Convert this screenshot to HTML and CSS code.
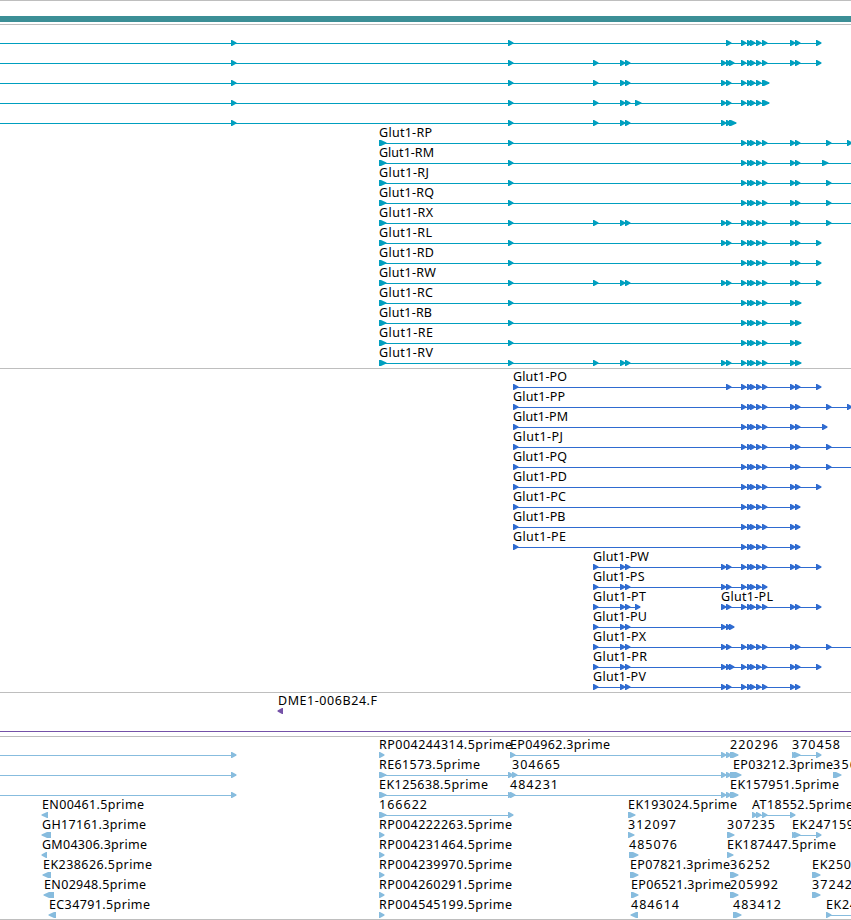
FILE: index.html
```html
<!DOCTYPE html>
<html lang="en">
<head>
    <meta charset="UTF-8">
    <meta name="viewport" content="width=device-width, initial-scale=1.0">
    <title>Glut1 - Genome Browser</title>
    <link rel="stylesheet" href="styles.css">
</head>
<body>
    <main class="browser">
        <div class="track gene-track"><div class="gene-bar"></div></div>
        <div class="track"><svg class="features transcripts" id="transcripts" width="851" height="343"></svg></div>
        <div class="track"><svg class="features cds" id="cds" width="851" height="323"></svg></div>
        <div class="track"><svg class="features bac" id="bac" width="851" height="43"></svg></div>
        <div class="track"><svg class="features est" id="est" width="851" height="182"></svg></div>
    </main>
    <script src="script.js"></script>
</body>
</html>
```
FILE: styles.css
```css
body {
    margin: 0;
    background: #fff;
    overflow: hidden;
}

.browser {
    width: 851px;
    border-top: 1px solid #bebebe;
}

.track {
    border-bottom: 1px solid #bebebe;
}

.gene-track {
    padding: 15px 0 2px;
}

.gene-bar {
    height: 6px;
    background: #3c8f96;
}

.features {
    display: block;
    fill: currentColor;
}

.features text {
    font-family: "Noto Sans", "DejaVu Sans", sans-serif;
    font-size: 12.5px;
    fill: #000;
}

.transcripts {
    color: #009fbf;
}

.cds {
    color: #2f6bd0;
}

.bac {
    color: #7552a8;
}

.est {
    color: #87bcde;
}
```
FILE: script.js
```js
const WIDTH = 851;
const FIRST_ROW = 18;
const ROW_HEIGHT = 20;

// exon = start, or [start, width]
const mid = [741, 747, 750, 756, 762];
const midLong = [741, 747, 750, 756, [762, 7]];
const pair = [790, 795];
const pairLong = [790, [795, 6]];
const small = [593, 620, 625];
const start = [[379, 7], 508];

// feature = [row, name, line start, line end, exons, text width]
const transcripts = [
    [0, '', 0, 821, [231, 508, 726, ...mid, ...pair, 816]],
    [1, '', 0, 821, [231, 508, ...small, 721, 726, 729, ...mid, ...pair, 816]],
    [2, '', 0, 769, [231, 508, ...small, 721, 726, ...midLong]],
    [3, '', 0, 769, [231, 508, ...small, [635, 6], 721, 726, ...midLong]],
    [4, '', 0, 736, [231, 508, ...small, 721, 726, [729, 7]]],
    [5, 'Glut1-RP', 379, WIDTH, [...start, ...mid, ...pair, 826, 847], 53],
    [6, 'Glut1-RM', 379, WIDTH, [...start, ...mid, ...pair, [822, 6]], 55],
    [7, 'Glut1-RJ', 379, WIDTH, [...start, ...mid, ...pair, 826], 50],
    [8, 'Glut1-RQ', 379, WIDTH, [...start, ...mid, ...pair, 826], 55],
    [9, 'Glut1-RX', 379, WIDTH, [...start, ...small, 721, 726, ...mid, ...pair, 826], 54],
    [10, 'Glut1-RL', 379, 821, [...start, 721, 726, ...mid, ...pair, 816], 53],
    [11, 'Glut1-RD', 379, 821, [...start, ...mid, ...pair, 816], 55],
    [12, 'Glut1-RW', 379, 821, [...start, ...small, 721, 726, ...mid, ...pair, 816], 57],
    [13, 'Glut1-RC', 379, 801, [...start, ...mid, ...pairLong], 54],
    [14, 'Glut1-RB', 379, 801, [...start, ...mid, ...pairLong], 53],
    [15, 'Glut1-RE', 379, 801, [...start, ...mid, ...pairLong], 54],
    [16, 'Glut1-RV', 379, 801, [...start, ...small, 721, 726, ...mid, ...pairLong], 54]
];

const cds = [
    [0, 'Glut1-PO', 513, 821, [513, 726, ...mid, ...pair, 816], 54],
    [1, 'Glut1-PP', 513, WIDTH, [513, ...mid, ...pair, 826, 847], 52],
    [2, 'Glut1-PM', 513, 827, [513, ...mid, ...pair, 822], 55],
    [3, 'Glut1-PJ', 513, WIDTH, [513, ...mid, ...pair, 826], 50],
    [4, 'Glut1-PQ', 513, WIDTH, [513, ...mid, ...pair, 826], 54],
    [5, 'Glut1-PD', 513, 821, [513, ...mid, ...pair, 816], 54],
    [6, 'Glut1-PC', 513, 800, [513, ...mid, ...pair], 53],
    [7, 'Glut1-PB', 513, 800, [513, ...mid, ...pair], 52.5],
    [8, 'Glut1-PE', 513, 800, [513, ...mid, ...pair], 53],
    [9, 'Glut1-PW', 593, 821, [...small, 721, 726, ...mid, ...pair, 816], 56],
    [10, 'Glut1-PS', 593, 767, [...small, 721, 726, ...mid], 51.5],
    [11, 'Glut1-PT', 593, 640, [...small, 635], 53],
    [11, 'Glut1-PL', 721, 821, [721, 726, ...mid, ...pair, 816], 52],
    [12, 'Glut1-PU', 593, 734, [...small, 721, 726, 729], 54],
    [13, 'Glut1-PX', 593, WIDTH, [...small, 721, 726, ...mid, ...pair, 826], 53],
    [14, 'Glut1-PR', 593, 821, [...small, 721, 726, 729, ...mid, ...pair, 816], 54],
    [15, 'Glut1-PV', 593, 800, [...small, 721, 726, ...mid, ...pair], 53]
];

// negative width = feature on the reverse strand
const bac = [
    [0, 'DME1-006B24.F', 278, 283, [[278, -5]], 99]
];

const est = [
    [0, '', 0, 236, [231]],
    [0, 'RP004244314.5prime', 379, 384, [379], 133],
    [0, 'EP04962.3prime', 510, 738, [510, 721, 726, [730, 8]], 100],
    [0, '220296', 730, 738, [], 48],
    [0, '370458', 792, 821, [792, [794, 6], 816], 48],
    [1, '', 0, 236, [231]],
    [1, 'RE61573.5prime', 379, 513, [[379, 7], 508], 101],
    [1, '304665', 512, 738, [512, 721, 726, [730, 8]], 48],
    [1, 'EP03212.3prime', 733, 741, [[733, 8]], 100],
    [1, '356', 833, 841, [[833, 8]], 24],
    [2, '', 0, 236, [231]],
    [2, 'EK125638.5prime', 379, 513, [[379, 7], 508], 109],
    [2, '484231', 510, 738, [510, 721, 726, [730, 8]], 48],
    [2, 'EK157951.5prime', 730, 738, [], 109],
    [3, 'EN00461.5prime', 42, 48, [[42, -6]], 102],
    [3, '166622', 379, 513, [[379, 7], 508], 48],
    [3, 'EK193024.5prime', 628, 635, [[628, 7]], 109],
    [3, 'AT18552.5prime', 752, 795, [752, 756, 762, 790], 101],
    [4, 'GH17161.3prime', 42, 51, [[42, -9]], 104],
    [4, 'RP004222263.5prime', 379, 384, [379], 133],
    [4, '312097', 628, 634, [[628, 6]], 48],
    [4, '307235', 727, 734, [[727, 7]], 48],
    [4, 'EK247159', 792, 821, [792, [794, 6], 816], 62],
    [5, 'GM04306.3prime', 42, 47, [[42, -5]], 105],
    [5, 'RP004231464.5prime', 379, 384, [379], 133],
    [5, '485076', 629, 638, [[629, 9]], 48],
    [5, 'EK187447.5prime', 727, 733, [[727, 6]], 109],
    [6, 'EK238626.5prime', 43, 51, [[43, -8]], 109],
    [6, 'RP004239970.5prime', 379, 384, [379], 133],
    [6, 'EP07821.3prime', 630, 638, [[630, 8]], 100],
    [6, '36252', 730, 738, [[730, 8]], 40],
    [6, 'EK250', 812, 820, [[812, 8]], 39],
    [7, 'EN02948.5prime', 44, 54, [[44, -10]], 102],
    [7, 'RP004260291.5prime', 379, 384, [379], 133],
    [7, 'EP06521.3prime', 631, 638, [[631, 7]], 100],
    [7, '205992', 730, 738, [[730, 8]], 48],
    [7, '37242', 812, 820, [[812, 8]], 40],
    [8, 'EC34791.5prime', 49, 56, [[49, -7]], 101],
    [8, 'RP004545199.5prime', 379, 384, [379], 133],
    [8, '484614', 631, 638, [[631, -7]], 48],
    [8, '483412', 733, 741, [[733, 8]], 48],
    [8, 'EK24', 826, WIDTH, [826, WIDTH], 31]
];

function arrow(x, width, y) {
    const size = Math.abs(width);
    const body = Math.max(1, size - 5);
    const tip = size - body + 0.5;
    if (width < 0) {
        return `<path d="M${x + size} ${y - 3}h${-body}l${-tip} 2.5v1l${tip} 2.5h${body}z"/>`;
    }
    return `<path d="M${x} ${y - 3}h${body}l${tip} 2.5v1l${-tip} 2.5h${-body}z"/>`;
}

function drawTrack(id, features) {
    let out = '';
    features.forEach(([row, name, from, to, exons, textWidth]) => {
        const y = FIRST_ROW + row * ROW_HEIGHT;
        if (exons.length > 1 || !name) {
            out += `<rect x="${from}" y="${y}" width="${to - from}" height="1"/>`;
        }
        exons.forEach(exon => {
            const [x, width] = Array.isArray(exon) ? exon : [exon, 5];
            out += arrow(x, width, y);
        });
        if (name) {
            out += `<text x="${from}" y="${y - 6}" textLength="${textWidth}">${name}</text>`;
        }
    });
    document.getElementById(id).innerHTML = out;
}

drawTrack('transcripts', transcripts);
drawTrack('cds', cds);
drawTrack('bac', bac);
drawTrack('est', est);

// clone that runs across the whole window
document.getElementById('bac').innerHTML += `<rect x="0" y="38" width="${WIDTH}" height="1"/>`;
```
